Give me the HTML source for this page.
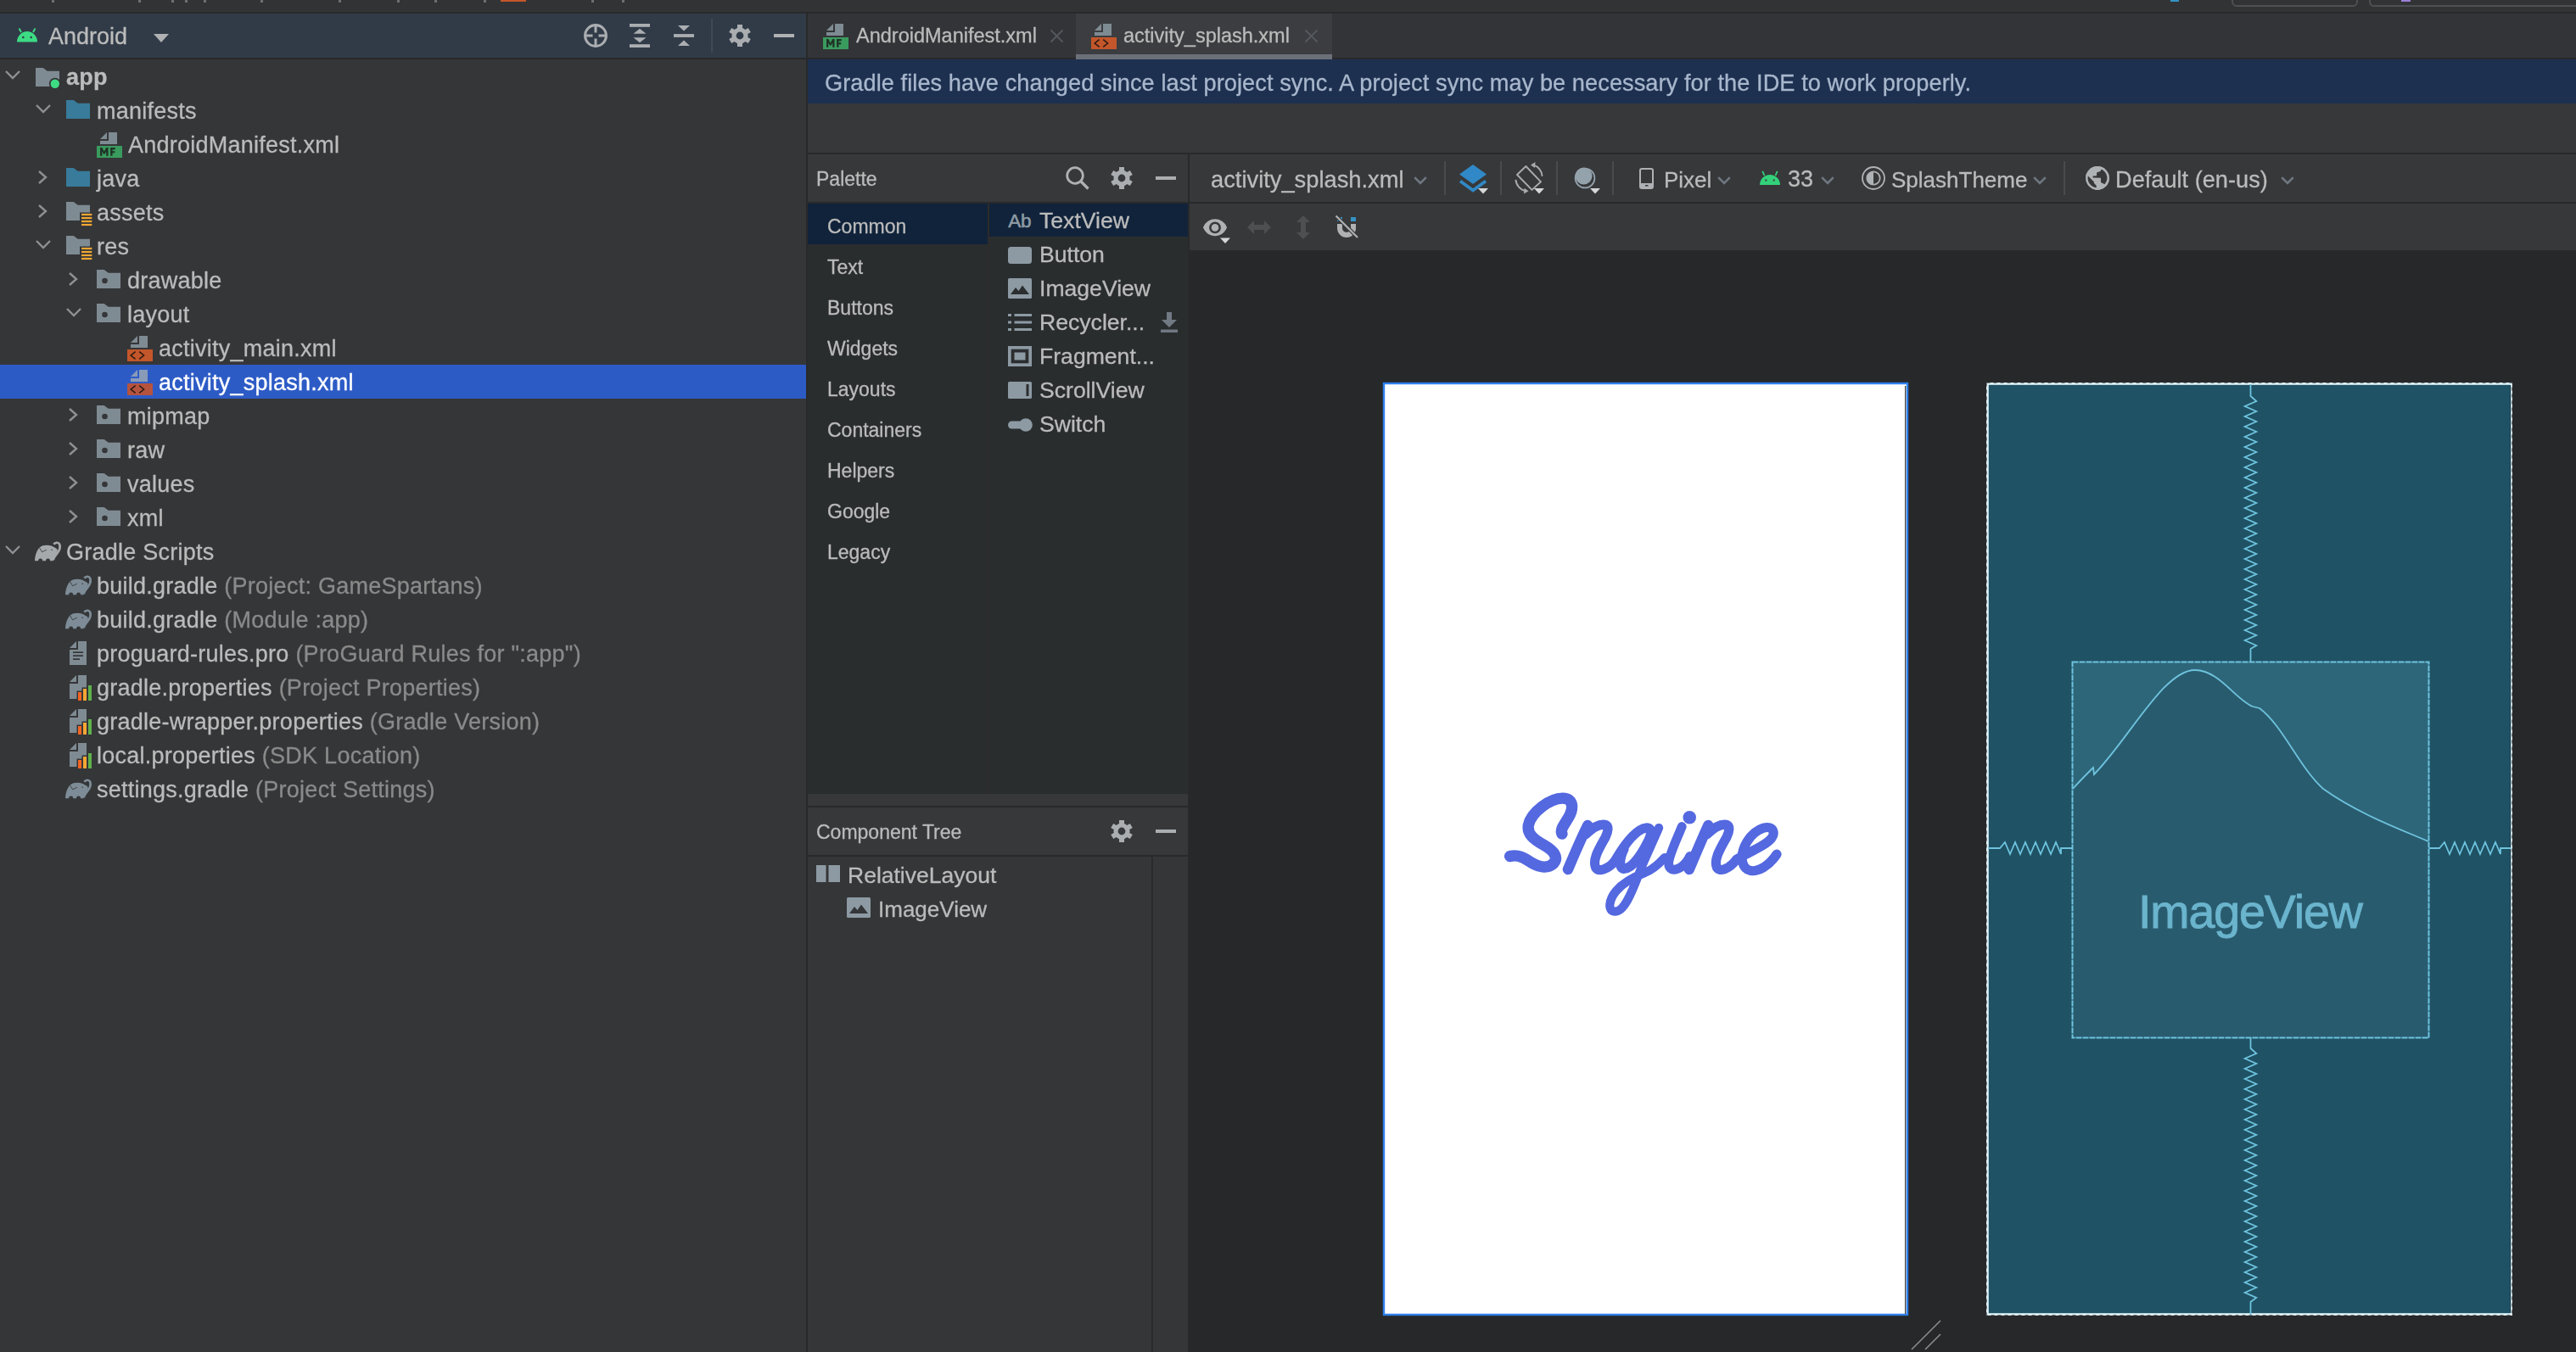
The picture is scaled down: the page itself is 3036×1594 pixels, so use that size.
<!DOCTYPE html><html><head><meta charset="utf-8"><style>html,body{margin:0;padding:0;}body{width:3036px;height:1594px;overflow:hidden;position:relative;background:#353638;font-family:"Liberation Sans", sans-serif;}.t{position:absolute;white-space:pre;line-height:1;will-change:transform;-webkit-text-stroke:0.3px currentColor;}svg{display:block}</style></head><body>
<div style="position:absolute;left:0px;top:0px;width:3036px;height:14px;background:#323335;"></div>
<div style="position:absolute;left:0px;top:14px;width:3036px;height:2px;background:#28292b;"></div>
<div style="position:absolute;left:0px;top:16px;width:950px;height:52px;background:#313b48;"></div>
<div style="position:absolute;left:0px;top:68px;width:950px;height:2px;background:#28292b;"></div>
<div style="position:absolute;left:950px;top:16px;width:2px;height:1578px;background:#28292b;"></div>
<svg style="position:absolute;left:20px;top:33px;overflow:visible" width="24" height="17"><path d="M0,16.5 A12,12.5 0 0 1 24,16.5 Z" fill="#3ddc84"/><path d="M5,5 L2.5,0.5 M19,5 L21.5,0.5" stroke="#3ddc84" stroke-width="1.8"/><circle cx="7.3" cy="11" r="1.3" fill="#313b48"/><circle cx="16.7" cy="11" r="1.3" fill="#313b48"/></svg>
<div class="t" style="left:57px;top:30.14px;font-size:27px;color:#bbbbbb;font-weight:normal;">Android</div>
<svg style="position:absolute;left:181px;top:40px;overflow:visible" width="18" height="10"><path d="M0,0 H18 L9,10 Z" fill="#afb1b3"/></svg>
<svg style="position:absolute;left:688px;top:28px;overflow:visible" width="28" height="28"><circle cx="14" cy="14" r="12.4" stroke="#abaeb1" stroke-width="3.1" fill="none"/><path d="M14,2 V10.5 M14,17.5 V26 M2,14 H10.5 M17.5,14 H26" stroke="#abaeb1" stroke-width="3"/></svg>
<svg style="position:absolute;left:742px;top:28px;overflow:visible" width="24" height="28"><rect x="0" y="0" width="24" height="3.8" fill="#abaeb1"/><rect x="0" y="24.2" width="24" height="3.8" fill="#abaeb1"/><path d="M4.5,11.8 L12,5.8 L19.5,11.8 Z M4.5,16.2 L12,22.2 L19.5,16.2 Z" fill="#abaeb1"/></svg>
<svg style="position:absolute;left:794px;top:30px;overflow:visible" width="24" height="24"><path d="M5,0 H19 L12,6.5 Z M5,24 H19 L12,17.5 Z" fill="#abaeb1"/><rect x="0" y="10.1" width="24" height="3.8" fill="#abaeb1"/></svg>
<div style="position:absolute;left:838px;top:22px;width:2px;height:40px;background:#3f4854;"></div>
<svg style="position:absolute;left:858.5px;top:29px;overflow:visible" width="26" height="26"><g fill="#abaeb1"><circle cx="13" cy="13" r="9.6"/><rect x="10" y="0" width="6" height="8" transform="rotate(0 13 13)"/><rect x="10" y="0" width="6" height="8" transform="rotate(60 13 13)"/><rect x="10" y="0" width="6" height="8" transform="rotate(120 13 13)"/><rect x="10" y="0" width="6" height="8" transform="rotate(180 13 13)"/><rect x="10" y="0" width="6" height="8" transform="rotate(240 13 13)"/><rect x="10" y="0" width="6" height="8" transform="rotate(300 13 13)"/></g><circle cx="13" cy="13" r="4.4" fill="#313b48"/></svg>
<div style="position:absolute;left:912px;top:40px;width:24px;height:4px;background:#afb1b3;"></div>
<svg style="position:absolute;left:6px;top:82.7px;overflow:visible" width="18" height="10"><path d="M1,1 L9,9 L17,1" stroke="#8e9093" stroke-width="2.4" fill="none"/></svg>
<svg style="position:absolute;left:42px;top:80px;overflow:visible" width="28" height="22"><path d="M0,0 H8.7 L13.7,3.8 H28 V22 H0 Z" fill="#7f8b93"/><circle cx="22.8" cy="18.8" r="7" fill="#353638"/><circle cx="22.8" cy="18.8" r="5.2" fill="#3ddc84"/></svg>
<div class="t" style="left:78px;top:78.14px;font-size:27px;color:#bbbbbb;font-weight:bold;letter-spacing:0.25px;">app</div>
<svg style="position:absolute;left:42px;top:122.7px;overflow:visible" width="18" height="10"><path d="M1,1 L9,9 L17,1" stroke="#8e9093" stroke-width="2.4" fill="none"/></svg>
<svg style="position:absolute;left:78px;top:118.3px;overflow:visible" width="28" height="22"><path d="M0,0 H8.7 L13.7,3.8 H28 V22 H0 Z" fill="#387b9b"/></svg>
<div class="t" style="left:114px;top:118.14px;font-size:27px;color:#bbbbbb;font-weight:normal;letter-spacing:0.25px;">manifests</div>
<svg style="position:absolute;left:114px;top:156px;overflow:visible" width="30" height="30"><path d="M4,8 L12,0 V8 Z" fill="#7f8b93"/><path d="M14,0 H24 V14 H4 V10 H14 Z" fill="#7f8b93"/><rect x="0" y="16" width="30" height="14" fill="#3a9b5e"/><path d="M4,27.7 V18.1 H6.4 L8.75,22.8 L11.1,18.1 H13.5 V27.7 H11.2 V22.2 L9.6,25.4 H7.9 L6.3,22.2 V27.7 Z" fill="#1f3327"/><rect x="16.2" y="18.1" width="2.3" height="9.6" fill="#1f3327"/><rect x="16.2" y="18.1" width="5.6" height="2.2" fill="#1f3327"/><rect x="16.2" y="22.2" width="5.1" height="2.1" fill="#1f3327"/></svg>
<div class="t" style="left:151px;top:158.14px;font-size:27px;color:#bbbbbb;font-weight:normal;letter-spacing:0.25px;">AndroidManifest.xml</div>
<svg style="position:absolute;left:45px;top:201px;overflow:visible" width="11" height="16"><path d="M1,1 L9,8 L1,15" stroke="#8e9093" stroke-width="2.4" fill="none"/></svg>
<svg style="position:absolute;left:78px;top:198.3px;overflow:visible" width="28" height="22"><path d="M0,0 H8.7 L13.7,3.8 H28 V22 H0 Z" fill="#387b9b"/></svg>
<div class="t" style="left:114px;top:198.14px;font-size:27px;color:#bbbbbb;font-weight:normal;letter-spacing:0.25px;">java</div>
<svg style="position:absolute;left:45px;top:241px;overflow:visible" width="11" height="16"><path d="M1,1 L9,8 L1,15" stroke="#8e9093" stroke-width="2.4" fill="none"/></svg>
<svg style="position:absolute;left:78px;top:238px;overflow:visible" width="31" height="30"><path d="M0,0 H8.7 L13.7,3.8 H28 V12.5 H16 V22 H0 Z" fill="#7f8b93"/><rect x="18" y="13.9" width="12.3" height="2.2" fill="#f0a732"/><rect x="18" y="17.9" width="12.3" height="2.2" fill="#f0a732"/><rect x="18" y="21.9" width="12.3" height="2.2" fill="#f0a732"/><rect x="18" y="25.9" width="12.3" height="2.2" fill="#f0a732"/></svg>
<div class="t" style="left:114px;top:238.14px;font-size:27px;color:#bbbbbb;font-weight:normal;letter-spacing:0.25px;">assets</div>
<svg style="position:absolute;left:42px;top:282.7px;overflow:visible" width="18" height="10"><path d="M1,1 L9,9 L17,1" stroke="#8e9093" stroke-width="2.4" fill="none"/></svg>
<svg style="position:absolute;left:78px;top:278px;overflow:visible" width="31" height="30"><path d="M0,0 H8.7 L13.7,3.8 H28 V12.5 H16 V22 H0 Z" fill="#7f8b93"/><rect x="18" y="13.9" width="12.3" height="2.2" fill="#f0a732"/><rect x="18" y="17.9" width="12.3" height="2.2" fill="#f0a732"/><rect x="18" y="21.9" width="12.3" height="2.2" fill="#f0a732"/><rect x="18" y="25.9" width="12.3" height="2.2" fill="#f0a732"/></svg>
<div class="t" style="left:114px;top:278.14px;font-size:27px;color:#bbbbbb;font-weight:normal;letter-spacing:0.25px;">res</div>
<svg style="position:absolute;left:81px;top:321px;overflow:visible" width="11" height="16"><path d="M1,1 L9,8 L1,15" stroke="#8e9093" stroke-width="2.4" fill="none"/></svg>
<svg style="position:absolute;left:114px;top:318px;overflow:visible" width="28" height="22"><path d="M0,0 H8.7 L13.7,3.8 H28 V22 H0 Z" fill="#7f8b93"/><circle cx="9.5" cy="13" r="3.3" fill="#353638"/></svg>
<div class="t" style="left:150px;top:318.14px;font-size:27px;color:#bbbbbb;font-weight:normal;letter-spacing:0.25px;">drawable</div>
<svg style="position:absolute;left:78px;top:362.7px;overflow:visible" width="18" height="10"><path d="M1,1 L9,9 L17,1" stroke="#8e9093" stroke-width="2.4" fill="none"/></svg>
<svg style="position:absolute;left:114px;top:358px;overflow:visible" width="28" height="22"><path d="M0,0 H8.7 L13.7,3.8 H28 V22 H0 Z" fill="#7f8b93"/><circle cx="9.5" cy="13" r="3.3" fill="#353638"/></svg>
<div class="t" style="left:150px;top:358.14px;font-size:27px;color:#bbbbbb;font-weight:normal;letter-spacing:0.25px;">layout</div>
<svg style="position:absolute;left:150px;top:396px;overflow:visible" width="30" height="30"><path d="M4,8 L12,0 V8 Z" fill="#7f8b93"/><path d="M14,0 H24 V14 H4 V10 H14 Z" fill="#7f8b93"/><rect x="0" y="16" width="30" height="14" fill="#c3562a"/><path d="M9.6,18.6 L4.2,23 L9.6,27.4 M14.2,18.6 L19.6,23 L14.2,27.4" stroke="#2a1a12" stroke-width="1.5" fill="none"/></svg>
<div class="t" style="left:187px;top:398.14px;font-size:27px;color:#bbbbbb;font-weight:normal;letter-spacing:0.25px;">activity_main.xml</div>
<div style="position:absolute;left:0px;top:430px;width:950px;height:40px;background:#2d5bc6;"></div>
<svg style="position:absolute;left:150px;top:436px;overflow:visible" width="30" height="30"><path d="M4,8 L12,0 V8 Z" fill="#8a9bb8"/><path d="M14,0 H24 V14 H4 V10 H14 Z" fill="#8a9bb8"/><rect x="0" y="16" width="30" height="14" fill="#b5533f"/><path d="M9.6,18.6 L4.2,23 L9.6,27.4 M14.2,18.6 L19.6,23 L14.2,27.4" stroke="#2a1a12" stroke-width="1.5" fill="none"/></svg>
<div class="t" style="left:187px;top:438.14px;font-size:27px;color:#ffffff;font-weight:normal;letter-spacing:0.25px;">activity_splash.xml</div>
<svg style="position:absolute;left:81px;top:481px;overflow:visible" width="11" height="16"><path d="M1,1 L9,8 L1,15" stroke="#8e9093" stroke-width="2.4" fill="none"/></svg>
<svg style="position:absolute;left:114px;top:478px;overflow:visible" width="28" height="22"><path d="M0,0 H8.7 L13.7,3.8 H28 V22 H0 Z" fill="#7f8b93"/><circle cx="9.5" cy="13" r="3.3" fill="#353638"/></svg>
<div class="t" style="left:150px;top:478.14px;font-size:27px;color:#bbbbbb;font-weight:normal;letter-spacing:0.25px;">mipmap</div>
<svg style="position:absolute;left:81px;top:521px;overflow:visible" width="11" height="16"><path d="M1,1 L9,8 L1,15" stroke="#8e9093" stroke-width="2.4" fill="none"/></svg>
<svg style="position:absolute;left:114px;top:518px;overflow:visible" width="28" height="22"><path d="M0,0 H8.7 L13.7,3.8 H28 V22 H0 Z" fill="#7f8b93"/><circle cx="9.5" cy="13" r="3.3" fill="#353638"/></svg>
<div class="t" style="left:150px;top:518.14px;font-size:27px;color:#bbbbbb;font-weight:normal;letter-spacing:0.25px;">raw</div>
<svg style="position:absolute;left:81px;top:561px;overflow:visible" width="11" height="16"><path d="M1,1 L9,8 L1,15" stroke="#8e9093" stroke-width="2.4" fill="none"/></svg>
<svg style="position:absolute;left:114px;top:558px;overflow:visible" width="28" height="22"><path d="M0,0 H8.7 L13.7,3.8 H28 V22 H0 Z" fill="#7f8b93"/><circle cx="9.5" cy="13" r="3.3" fill="#353638"/></svg>
<div class="t" style="left:150px;top:558.14px;font-size:27px;color:#bbbbbb;font-weight:normal;letter-spacing:0.25px;">values</div>
<svg style="position:absolute;left:81px;top:601px;overflow:visible" width="11" height="16"><path d="M1,1 L9,8 L1,15" stroke="#8e9093" stroke-width="2.4" fill="none"/></svg>
<svg style="position:absolute;left:114px;top:598px;overflow:visible" width="28" height="22"><path d="M0,0 H8.7 L13.7,3.8 H28 V22 H0 Z" fill="#7f8b93"/><circle cx="9.5" cy="13" r="3.3" fill="#353638"/></svg>
<div class="t" style="left:150px;top:598.14px;font-size:27px;color:#bbbbbb;font-weight:normal;letter-spacing:0.25px;">xml</div>
<svg style="position:absolute;left:6px;top:642.7px;overflow:visible" width="18" height="10"><path d="M1,1 L9,9 L17,1" stroke="#8e9093" stroke-width="2.4" fill="none"/></svg>
<svg style="position:absolute;left:41px;top:639px;overflow:visible" width="30" height="22"><g transform="scale(0.0592)"><path d="M0,375 C2,270 40,160 95,108 C160,55 260,55 340,80 L425,125 C450,140 458,160 448,190 C430,240 385,300 368,335 L365,375 L305,375 A42,45 0 0 0 220,375 L155,375 A42,45 0 0 0 70,375 Z" fill="#a6a9ac"/><path d="M378,48 C405,5 470,-2 492,45 C515,100 492,165 445,225 C405,275 372,310 368,360" stroke="#a6a9ac" stroke-width="46" fill="none"/><path d="M92,112 L145,200 L235,155" stroke="#353638" stroke-width="14" fill="none"/><circle cx="340" cy="155" r="13" fill="#353638"/></g></svg>
<div class="t" style="left:78px;top:638.14px;font-size:27px;color:#bbbbbb;font-weight:normal;letter-spacing:0.25px;">Gradle Scripts</div>
<svg style="position:absolute;left:77px;top:679px;overflow:visible" width="30" height="22"><g transform="scale(0.0592)"><path d="M0,375 C2,270 40,160 95,108 C160,55 260,55 340,80 L425,125 C450,140 458,160 448,190 C430,240 385,300 368,335 L365,375 L305,375 A42,45 0 0 0 220,375 L155,375 A42,45 0 0 0 70,375 Z" fill="#7d8c96"/><path d="M378,48 C405,5 470,-2 492,45 C515,100 492,165 445,225 C405,275 372,310 368,360" stroke="#7d8c96" stroke-width="46" fill="none"/><path d="M92,112 L145,200 L235,155" stroke="#353638" stroke-width="14" fill="none"/><circle cx="340" cy="155" r="13" fill="#353638"/></g></svg>
<div class="t" style="left:114px;top:678.14px;font-size:27px;color:#bbbbbb;font-weight:normal;letter-spacing:0.25px;">build.gradle <span style="color:#8a8a8a">(Project: GameSpartans)</span></div>
<svg style="position:absolute;left:77px;top:719px;overflow:visible" width="30" height="22"><g transform="scale(0.0592)"><path d="M0,375 C2,270 40,160 95,108 C160,55 260,55 340,80 L425,125 C450,140 458,160 448,190 C430,240 385,300 368,335 L365,375 L305,375 A42,45 0 0 0 220,375 L155,375 A42,45 0 0 0 70,375 Z" fill="#7d8c96"/><path d="M378,48 C405,5 470,-2 492,45 C515,100 492,165 445,225 C405,275 372,310 368,360" stroke="#7d8c96" stroke-width="46" fill="none"/><path d="M92,112 L145,200 L235,155" stroke="#353638" stroke-width="14" fill="none"/><circle cx="340" cy="155" r="13" fill="#353638"/></g></svg>
<div class="t" style="left:114px;top:718.14px;font-size:27px;color:#bbbbbb;font-weight:normal;letter-spacing:0.25px;">build.gradle <span style="color:#8a8a8a">(Module :app)</span></div>
<svg style="position:absolute;left:82px;top:756px;overflow:visible" width="20" height="28"><path d="M0,8 L8,0 V8 Z" fill="#7f8b93"/><path d="M10,0 H20 V28 H0 V10 H10 Z" fill="#7f8b93"/><rect x="4" y="12.3" width="12" height="1.7" fill="#353638"/><rect x="4" y="16.3" width="12" height="1.7" fill="#353638"/><rect x="4" y="20.3" width="8" height="1.7" fill="#353638"/></svg>
<div class="t" style="left:114px;top:758.14px;font-size:27px;color:#bbbbbb;font-weight:normal;letter-spacing:0.25px;">proguard-rules.pro <span style="color:#8a8a8a">(ProGuard Rules for ":app")</span></div>
<svg style="position:absolute;left:82px;top:796px;overflow:visible" width="28" height="30"><path d="M0,8 L8,0 V8 Z" fill="#7f8b93"/><path d="M10,0 H20 V28 H0 V10 H10 Z" fill="#7f8b93"/><path d="M8.5,31 V18.5 H14.5 V14.5 H20.5 V31 Z" fill="#353638"/><rect x="10" y="20" width="4" height="10" fill="#f26522"/><rect x="16" y="16" width="4" height="14" fill="#f5a633"/><rect x="22" y="12" width="4" height="18" fill="#5eb14a"/></svg>
<div class="t" style="left:114px;top:798.14px;font-size:27px;color:#bbbbbb;font-weight:normal;letter-spacing:0.25px;">gradle.properties <span style="color:#8a8a8a">(Project Properties)</span></div>
<svg style="position:absolute;left:82px;top:836px;overflow:visible" width="28" height="30"><path d="M0,8 L8,0 V8 Z" fill="#7f8b93"/><path d="M10,0 H20 V28 H0 V10 H10 Z" fill="#7f8b93"/><path d="M8.5,31 V18.5 H14.5 V14.5 H20.5 V31 Z" fill="#353638"/><rect x="10" y="20" width="4" height="10" fill="#f26522"/><rect x="16" y="16" width="4" height="14" fill="#f5a633"/><rect x="22" y="12" width="4" height="18" fill="#5eb14a"/></svg>
<div class="t" style="left:114px;top:838.14px;font-size:27px;color:#bbbbbb;font-weight:normal;letter-spacing:0.25px;">gradle-wrapper.properties <span style="color:#8a8a8a">(Gradle Version)</span></div>
<svg style="position:absolute;left:82px;top:876px;overflow:visible" width="28" height="30"><path d="M0,8 L8,0 V8 Z" fill="#7f8b93"/><path d="M10,0 H20 V28 H0 V10 H10 Z" fill="#7f8b93"/><path d="M8.5,31 V18.5 H14.5 V14.5 H20.5 V31 Z" fill="#353638"/><rect x="10" y="20" width="4" height="10" fill="#f26522"/><rect x="16" y="16" width="4" height="14" fill="#f5a633"/><rect x="22" y="12" width="4" height="18" fill="#5eb14a"/></svg>
<div class="t" style="left:114px;top:878.14px;font-size:27px;color:#bbbbbb;font-weight:normal;letter-spacing:0.25px;">local.properties <span style="color:#8a8a8a">(SDK Location)</span></div>
<svg style="position:absolute;left:77px;top:919px;overflow:visible" width="30" height="22"><g transform="scale(0.0592)"><path d="M0,375 C2,270 40,160 95,108 C160,55 260,55 340,80 L425,125 C450,140 458,160 448,190 C430,240 385,300 368,335 L365,375 L305,375 A42,45 0 0 0 220,375 L155,375 A42,45 0 0 0 70,375 Z" fill="#7d8c96"/><path d="M378,48 C405,5 470,-2 492,45 C515,100 492,165 445,225 C405,275 372,310 368,360" stroke="#7d8c96" stroke-width="46" fill="none"/><path d="M92,112 L145,200 L235,155" stroke="#353638" stroke-width="14" fill="none"/><circle cx="340" cy="155" r="13" fill="#353638"/></g></svg>
<div class="t" style="left:114px;top:918.14px;font-size:27px;color:#bbbbbb;font-weight:normal;letter-spacing:0.25px;">settings.gradle <span style="color:#8a8a8a">(Project Settings)</span></div>
<div style="position:absolute;left:952px;top:16px;width:2084px;height:52px;background:#333437;"></div>
<div style="position:absolute;left:1268px;top:16px;width:302px;height:52px;background:#3b3d40;"></div>
<div style="position:absolute;left:952px;top:68px;width:2084px;height:2px;background:#28292b;"></div>
<div style="position:absolute;left:1268px;top:64.3px;width:302px;height:5.7px;background:#6b6f78;"></div>
<svg style="position:absolute;left:970px;top:28px;overflow:visible" width="30" height="30"><path d="M4,8 L12,0 V8 Z" fill="#7f8b93"/><path d="M14,0 H24 V14 H4 V10 H14 Z" fill="#7f8b93"/><rect x="0" y="16" width="30" height="14" fill="#3a9b5e"/><path d="M4,27.7 V18.1 H6.4 L8.75,22.8 L11.1,18.1 H13.5 V27.7 H11.2 V22.2 L9.6,25.4 H7.9 L6.3,22.2 V27.7 Z" fill="#1f3327"/><rect x="16.2" y="18.1" width="2.3" height="9.6" fill="#1f3327"/><rect x="16.2" y="18.1" width="5.6" height="2.2" fill="#1f3327"/><rect x="16.2" y="22.2" width="5.1" height="2.1" fill="#1f3327"/></svg>
<div class="t" style="left:1009px;top:31.11px;font-size:23.5px;color:#bbbbbb;font-weight:normal;">AndroidManifest.xml</div>
<svg style="position:absolute;left:1238px;top:35px;overflow:visible" width="15" height="15"><path d="M0.5,0.5 L14.5,14.5 M14.5,0.5 L0.5,14.5" stroke="#55595d" stroke-width="1.8"/></svg>
<svg style="position:absolute;left:1286px;top:28px;overflow:visible" width="30" height="30"><path d="M4,8 L12,0 V8 Z" fill="#7f8b93"/><path d="M14,0 H24 V14 H4 V10 H14 Z" fill="#7f8b93"/><rect x="0" y="16" width="30" height="14" fill="#c3562a"/><path d="M9.6,18.6 L4.2,23 L9.6,27.4 M14.2,18.6 L19.6,23 L14.2,27.4" stroke="#2a1a12" stroke-width="1.5" fill="none"/></svg>
<div class="t" style="left:1324px;top:31.11px;font-size:23.5px;color:#bbbbbb;font-weight:normal;">activity_splash.xml</div>
<svg style="position:absolute;left:1538px;top:35px;overflow:visible" width="15" height="15"><path d="M0.5,0.5 L14.5,14.5 M14.5,0.5 L0.5,14.5" stroke="#55595d" stroke-width="1.8"/></svg>
<div style="position:absolute;left:590px;top:0px;width:30px;height:2px;background:#c3562a;"></div>
<div style="position:absolute;left:60.5px;top:0px;width:3px;height:2.5px;background:#6e6f71;"></div>
<div style="position:absolute;left:162.5px;top:0px;width:3px;height:2.5px;background:#6e6f71;"></div>
<div style="position:absolute;left:201.5px;top:0px;width:3px;height:2.5px;background:#6e6f71;"></div>
<div style="position:absolute;left:217.5px;top:0px;width:3px;height:2.5px;background:#6e6f71;"></div>
<div style="position:absolute;left:240.1px;top:0px;width:3px;height:2.5px;background:#6e6f71;"></div>
<div style="position:absolute;left:307.1px;top:0px;width:3px;height:2.5px;background:#6e6f71;"></div>
<div style="position:absolute;left:399.3px;top:0px;width:3px;height:2.5px;background:#6e6f71;"></div>
<div style="position:absolute;left:468.2px;top:0px;width:3px;height:2.5px;background:#6e6f71;"></div>
<div style="position:absolute;left:512.1px;top:0px;width:3px;height:2.5px;background:#6e6f71;"></div>
<div style="position:absolute;left:570.3px;top:0px;width:3px;height:2.5px;background:#6e6f71;"></div>
<div style="position:absolute;left:696.5px;top:0px;width:3px;height:2.5px;background:#6e6f71;"></div>
<div style="position:absolute;left:733.4px;top:0px;width:3px;height:2.5px;background:#6e6f71;"></div>
<div style="position:absolute;left:2558px;top:0px;width:10px;height:2px;background:#3592c4;"></div>
<div style="position:absolute;left:2830px;top:0px;width:11px;height:2px;background:#9b7fd4;"></div>
<div style="position:absolute;left:2630px;top:-19px;width:149px;height:27px;border:2px solid #4e5053;border-radius:6px;box-sizing:border-box"></div>
<div style="position:absolute;left:2792px;top:-19px;width:260px;height:27px;border:2px solid #4e5053;border-radius:6px;box-sizing:border-box"></div>
<div style="position:absolute;left:952px;top:70px;width:2084px;height:52px;background:#1d3050;"></div>
<div class="t" style="left:972px;top:83.98px;font-size:27.2px;color:#a8b7cc;font-weight:normal;letter-spacing:0.06px;">Gradle files have changed since last project sync. A project sync may be necessary for the IDE to work properly.</div>
<div style="position:absolute;left:952px;top:122px;width:2084px;height:58px;background:#37383a;"></div>
<div style="position:absolute;left:952px;top:180px;width:2084px;height:2px;background:#28292b;"></div>
<div style="position:absolute;left:952px;top:182px;width:448px;height:56px;background:#37383a;"></div>
<div class="t" style="left:962px;top:199.53px;font-size:23px;color:#bbbbbb;font-weight:normal;">Palette</div>
<svg style="position:absolute;left:1256px;top:196px;overflow:visible" width="28" height="28"><circle cx="11" cy="11" r="9.3" stroke="#afb1b3" stroke-width="2.8" fill="none"/><path d="M17.5,17.5 L26.5,26.5" stroke="#afb1b3" stroke-width="3.2"/></svg>
<svg style="position:absolute;left:1309px;top:197px;overflow:visible" width="26" height="26"><g fill="#abaeb1"><circle cx="13" cy="13" r="9.6"/><rect x="10" y="0" width="6" height="8" transform="rotate(0 13 13)"/><rect x="10" y="0" width="6" height="8" transform="rotate(60 13 13)"/><rect x="10" y="0" width="6" height="8" transform="rotate(120 13 13)"/><rect x="10" y="0" width="6" height="8" transform="rotate(180 13 13)"/><rect x="10" y="0" width="6" height="8" transform="rotate(240 13 13)"/><rect x="10" y="0" width="6" height="8" transform="rotate(300 13 13)"/></g><circle cx="13" cy="13" r="4.4" fill="#37383a"/></svg>
<div style="position:absolute;left:1362px;top:208px;width:24px;height:4px;background:#abaeb1;"></div>
<div style="position:absolute;left:952px;top:238px;width:448px;height:2px;background:#28292b;"></div>
<div style="position:absolute;left:952px;top:240px;width:448px;height:696px;background:#2a2d2e;"></div>
<div style="position:absolute;left:1164px;top:240px;width:1.5px;height:696px;background:#2e2b2b;"></div>
<div style="position:absolute;left:952px;top:240px;width:212px;height:48px;background:#10233a;"></div>
<div style="position:absolute;left:1166px;top:240px;width:234px;height:39px;background:#10233a;"></div>
<div class="t" style="left:975px;top:255.53px;font-size:23px;color:#bbbbbb;font-weight:normal;">Common</div>
<div class="t" style="left:975px;top:303.53px;font-size:23px;color:#bbbbbb;font-weight:normal;">Text</div>
<div class="t" style="left:975px;top:351.53px;font-size:23px;color:#bbbbbb;font-weight:normal;">Buttons</div>
<div class="t" style="left:975px;top:399.53px;font-size:23px;color:#bbbbbb;font-weight:normal;">Widgets</div>
<div class="t" style="left:975px;top:447.53px;font-size:23px;color:#bbbbbb;font-weight:normal;">Layouts</div>
<div class="t" style="left:975px;top:495.53px;font-size:23px;color:#bbbbbb;font-weight:normal;">Containers</div>
<div class="t" style="left:975px;top:543.53px;font-size:23px;color:#bbbbbb;font-weight:normal;">Helpers</div>
<div class="t" style="left:975px;top:591.53px;font-size:23px;color:#bbbbbb;font-weight:normal;">Google</div>
<div class="t" style="left:975px;top:639.53px;font-size:23px;color:#bbbbbb;font-weight:normal;">Legacy</div>
<svg style="position:absolute;left:1188px;top:251px;overflow:visible" width="28" height="24"><text x="0.3" y="17" font-family="Liberation Sans" font-size="22.5" fill="#8d9aa3" stroke="#8d9aa3" stroke-width="0.6" letter-spacing="-0.3">Ab</text></svg>
<div class="t" style="left:1224.5px;top:247.48px;font-size:26.6px;color:#bbbbbb;font-weight:normal;">TextView</div>
<svg style="position:absolute;left:1188px;top:290px;overflow:visible" width="28" height="24"><rect x="0" y="1" width="28" height="20" rx="3.5" fill="#8d9aa3"/></svg>
<div class="t" style="left:1224.5px;top:287.48px;font-size:26.6px;color:#bbbbbb;font-weight:normal;">Button</div>
<svg style="position:absolute;left:1188px;top:328px;overflow:visible" width="28" height="24"><rect x="0" y="0" width="28" height="24" rx="1.5" fill="#8d9aa3"/><path d="M3,19 L9,11 L12.5,15 L17,8.5 L25,19 Z" fill="#2b2d2f"/></svg>
<div class="t" style="left:1224.5px;top:327.48px;font-size:26.6px;color:#bbbbbb;font-weight:normal;">ImageView</div>
<svg style="position:absolute;left:1188px;top:370px;overflow:visible" width="28" height="24"><g fill="#8d9aa3"><rect x="0" y="0" width="4" height="3"/><rect x="7.5" y="0" width="20.5" height="3"/><rect x="0" y="8.5" width="4" height="3"/><rect x="7.5" y="8.5" width="20.5" height="3"/><rect x="0" y="17" width="4" height="3"/><rect x="7.5" y="17" width="20.5" height="3"/></g></svg>
<div class="t" style="left:1224.5px;top:367.48px;font-size:26.6px;color:#bbbbbb;font-weight:normal;">Recycler...</div>
<svg style="position:absolute;left:1188px;top:408px;overflow:visible" width="28" height="24"><rect x="0" y="0" width="28" height="24" fill="#8d9aa3"/><rect x="3.7" y="3.7" width="20.6" height="16.6" fill="#2b2d2f"/><rect x="7.5" y="7.5" width="13" height="9" fill="#8d9aa3"/></svg>
<div class="t" style="left:1224.5px;top:407.48px;font-size:26.6px;color:#bbbbbb;font-weight:normal;">Fragment...</div>
<svg style="position:absolute;left:1188px;top:450px;overflow:visible" width="28" height="24"><rect x="0" y="0" width="28" height="20" rx="1.5" fill="#8d9aa3"/><rect x="21.5" y="3" width="3" height="14" fill="#2b2d2f"/></svg>
<div class="t" style="left:1224.5px;top:447.48px;font-size:26.6px;color:#bbbbbb;font-weight:normal;">ScrollView</div>
<svg style="position:absolute;left:1188px;top:492px;overflow:visible" width="28" height="24"><path d="M4.5,4.5 H16 V13.5 H4.5 A4.5,4.5 0 0 1 4.5,4.5 Z" fill="#8d9aa3"/><circle cx="21" cy="9" r="7.8" fill="#8d9aa3"/></svg>
<div class="t" style="left:1224.5px;top:487.48px;font-size:26.6px;color:#bbbbbb;font-weight:normal;">Switch</div>
<svg style="position:absolute;left:1368px;top:368px;overflow:visible" width="20" height="24"><path d="M7,0 H13 V9 H19 L10,18 L1,9 H7 Z" fill="#707984"/><rect x="0" y="20.5" width="20" height="3.5" fill="#707984"/></svg>
<div style="position:absolute;left:952px;top:936px;width:448px;height:14px;background:#37383a;"></div>
<div style="position:absolute;left:952px;top:950px;width:448px;height:2px;background:#28292b;"></div>
<div style="position:absolute;left:952px;top:952px;width:448px;height:56px;background:#37383a;"></div>
<div class="t" style="left:962px;top:969.53px;font-size:23px;color:#bbbbbb;font-weight:normal;">Component Tree</div>
<svg style="position:absolute;left:1309px;top:967px;overflow:visible" width="26" height="26"><g fill="#abaeb1"><circle cx="13" cy="13" r="9.6"/><rect x="10" y="0" width="6" height="8" transform="rotate(0 13 13)"/><rect x="10" y="0" width="6" height="8" transform="rotate(60 13 13)"/><rect x="10" y="0" width="6" height="8" transform="rotate(120 13 13)"/><rect x="10" y="0" width="6" height="8" transform="rotate(180 13 13)"/><rect x="10" y="0" width="6" height="8" transform="rotate(240 13 13)"/><rect x="10" y="0" width="6" height="8" transform="rotate(300 13 13)"/></g><circle cx="13" cy="13" r="4.4" fill="#37383a"/></svg>
<div style="position:absolute;left:1362px;top:978px;width:24px;height:4px;background:#abaeb1;"></div>
<div style="position:absolute;left:952px;top:1008px;width:448px;height:2px;background:#28292b;"></div>
<div style="position:absolute;left:952px;top:1010px;width:448px;height:584px;background:#353638;"></div>
<div style="position:absolute;left:1357px;top:1010px;width:2px;height:584px;background:#2a2b2d;"></div>
<svg style="position:absolute;left:962px;top:1020px;overflow:visible" width="28" height="20"><rect x="0" y="0" width="11.5" height="20" fill="#8d9aa3"/><rect x="14.5" y="0" width="13.5" height="20" fill="#8d9aa3"/></svg>
<div class="t" style="left:999px;top:1018.57px;font-size:26.5px;color:#bbbbbb;font-weight:normal;">RelativeLayout</div>
<svg style="position:absolute;left:998px;top:1058px;overflow:visible" width="28" height="24"><rect x="0" y="0" width="28" height="24" rx="1.5" fill="#8d9aa3"/><path d="M3,19 L9,11 L12.5,15 L17,8.5 L25,19 Z" fill="#353638"/></svg>
<div class="t" style="left:1035px;top:1058.99px;font-size:26px;color:#bbbbbb;font-weight:normal;">ImageView</div>
<div style="position:absolute;left:1400px;top:182px;width:2px;height:1412px;background:#28292b;"></div>
<div style="position:absolute;left:1402px;top:182px;width:1634px;height:56px;background:#37383a;"></div>
<div style="position:absolute;left:1402px;top:238px;width:1634px;height:2px;background:#28292b;"></div>
<div style="position:absolute;left:1402px;top:240px;width:1634px;height:55px;background:#37383a;"></div>
<div style="position:absolute;left:1402px;top:295px;width:1634px;height:2px;background:#28292b;"></div>
<div style="position:absolute;left:1402px;top:297px;width:1634px;height:1297px;background:#27282a;"></div>
<div class="t" style="left:1427px;top:197.89px;font-size:27.3px;color:#bbbbbb;font-weight:normal;">activity_splash.xml</div>
<svg style="position:absolute;left:1666px;top:207.5px;overflow:visible" width="16" height="10"><path d="M1.2,1.2 L8,8 L14.8,1.2" stroke="#6f7881" stroke-width="2.6" fill="none"/></svg>
<div style="position:absolute;left:1702px;top:190px;width:2px;height:40px;background:#4a4b4d;"></div>
<div style="position:absolute;left:1768px;top:190px;width:2px;height:40px;background:#4a4b4d;"></div>
<div style="position:absolute;left:1834px;top:190px;width:2px;height:40px;background:#4a4b4d;"></div>
<div style="position:absolute;left:1900px;top:190px;width:2px;height:40px;background:#4a4b4d;"></div>
<div style="position:absolute;left:2432px;top:190px;width:2px;height:40px;background:#4a4b4d;"></div>
<svg style="position:absolute;left:1720px;top:194px;overflow:visible" width="34" height="34"><path d="M16,0 L32,11.5 L16,23 L0,11.5 Z" fill="#3089c6"/><path d="M1,19.5 L16,30.5 L31,19.5" stroke="#3089c6" stroke-width="3.8" fill="none"/><path d="M22,28 H34 L28,34.5 Z" fill="#d4d6d8"/></svg>
<svg style="position:absolute;left:1780px;top:190px;overflow:visible" width="45" height="45"><path d="M8,16 L18.4,6 L36,24.3 L25.5,33.9 Z" stroke="#a9acaf" stroke-width="1.9" fill="none" stroke-linejoin="round"/><path d="M27,4.3 A15,15 0 0 1 37.6,17.7" stroke="#a9acaf" stroke-width="1.9" fill="none"/><path d="M24,4.6 L29.5,1 L29,8 Z" fill="#a9acaf"/><path d="M6.4,21.8 A15,15 0 0 0 18.5,35.3" stroke="#a9acaf" stroke-width="1.9" fill="none"/><path d="M21.5,35.2 L16,38.6 L16.5,31.8 Z" fill="#a9acaf"/><path d="M28,32 H40 L34,38.5 Z" fill="#d4d6d8"/></svg>
<svg style="position:absolute;left:1850px;top:192px;overflow:visible" width="40" height="40"><circle cx="18" cy="18" r="11.4" stroke="#94a2ac" stroke-width="1.8" fill="none"/><circle cx="16.5" cy="15.5" r="10" fill="#94a2ac"/><path d="M24,30 H36 L30,36.5 Z" fill="#d4d6d8"/></svg>
<svg style="position:absolute;left:1932px;top:198px;overflow:visible" width="17" height="25"><rect x="1" y="1" width="15" height="23" rx="2" stroke="#aeb1b4" stroke-width="2" fill="none"/><rect x="1" y="18" width="15" height="6" fill="#aeb1b4"/><rect x="7" y="20" width="3.5" height="1.5" fill="#37383a"/></svg>
<div class="t" style="left:1961px;top:198.99px;font-size:26px;color:#bbbbbb;font-weight:normal;">Pixel</div>
<svg style="position:absolute;left:2024px;top:207.5px;overflow:visible" width="16" height="10"><path d="M1.2,1.2 L8,8 L14.8,1.2" stroke="#6f7881" stroke-width="2.6" fill="none"/></svg>
<svg style="position:absolute;left:2074px;top:201px;overflow:visible" width="24" height="17"><path d="M0,17 A12,12 0 0 1 24,17 Z" fill="#33d17a"/><path d="M5.5,6 L3.3,0.8 M18.5,6 L20.7,0.8" stroke="#33d17a" stroke-width="1.8"/><rect x="6.3" y="10.5" width="2" height="2" fill="#37383a"/><rect x="15.7" y="10.5" width="2" height="2" fill="#37383a"/></svg>
<div class="t" style="left:2107px;top:198.14px;font-size:27px;color:#bbbbbb;font-weight:normal;">33</div>
<svg style="position:absolute;left:2146px;top:207.5px;overflow:visible" width="16" height="10"><path d="M1.2,1.2 L8,8 L14.8,1.2" stroke="#6f7881" stroke-width="2.6" fill="none"/></svg>
<svg style="position:absolute;left:2194px;top:196px;overflow:visible" width="28" height="28"><circle cx="14" cy="14" r="13" stroke="#aeb2b5" stroke-width="1.8" fill="none"/><circle cx="14" cy="14" r="7.7" stroke="#aeb2b5" stroke-width="1.8" fill="none"/><path d="M14,6.3 A7.7,7.7 0 0 0 14,21.7 Z" fill="#aeb2b5"/></svg>
<div class="t" style="left:2229px;top:198.99px;font-size:26px;color:#bbbbbb;font-weight:normal;">SplashTheme</div>
<svg style="position:absolute;left:2396px;top:207.5px;overflow:visible" width="16" height="10"><path d="M1.2,1.2 L8,8 L14.8,1.2" stroke="#6f7881" stroke-width="2.6" fill="none"/></svg>
<svg style="position:absolute;left:2450px;top:190px;overflow:visible" width="45" height="40"><circle cx="22" cy="20" r="13.9" fill="#aeb2b5"/><path d="M26.3,10.1 L25.4,12.1 L21.3,13.3 L21,17.2 L16.6,17.5 L16.6,19.5 L26,19.8 L26,25.1 L30.5,27.2 L34,22 L34,14 L30,9 Z M11.2,17.8 L17.8,24.3 L18,26 L20.7,28.7 L20.7,31.5 L14,32 L8,27 L7.5,19 Z" fill="#37383a"/><circle cx="22" cy="20" r="12.65" stroke="#aeb2b5" stroke-width="2.5" fill="none"/></svg>
<div class="t" style="left:2493px;top:197.98px;font-size:27.2px;color:#bbbbbb;font-weight:normal;">Default (en-us)</div>
<svg style="position:absolute;left:2688px;top:207.5px;overflow:visible" width="16" height="10"><path d="M1.2,1.2 L8,8 L14.8,1.2" stroke="#6f7881" stroke-width="2.6" fill="none"/></svg>
<svg style="position:absolute;left:1418px;top:257.5px;overflow:visible" width="34" height="30"><path d="M0,10.25 C5,-3 23,-3 28,10.25 C23,23.5 5,23.5 0,10.25 Z" fill="#afb1b3"/><circle cx="14" cy="10.4" r="6.9" fill="#37383a"/><circle cx="14" cy="10.4" r="4.3" fill="#afb1b3"/><path d="M20,22.5 H32 L26,29 Z" fill="#d4d6d8"/></svg>
<svg style="position:absolute;left:1470px;top:260px;overflow:visible" width="28" height="16"><path d="M0,8 L8,0 V5 H20 V0 L28,8 L20,16 V11 H8 V16 Z" fill="#4e4f51"/></svg>
<svg style="position:absolute;left:1528px;top:254px;overflow:visible" width="16" height="28"><path d="M8,0 L16,8 H11 V20 H16 L8,28 L0,20 H5 V8 H0 Z" fill="#4e4f51"/></svg>
<svg style="position:absolute;left:1574px;top:254px;overflow:visible" width="28" height="28"><path d="M2,10 V15 A11,11 0 0 0 24,15 V10 H18 V15 A5,5 0 0 1 8,15 V10 Z" fill="#afb1b3"/><rect x="2" y="2" width="6" height="5" fill="#3592c4"/><rect x="18" y="2" width="6" height="5" fill="#3592c4"/><path d="M0,0 L26,26" stroke="#37383a" stroke-width="4.5"/><path d="M0.5,0.5 L26,26" stroke="#afb1b3" stroke-width="2.2"/></svg>
<div style="position:absolute;left:1630px;top:451px;width:619px;height:1100px;background:#ffffff;"></div>
<svg style="position:absolute;left:1630px;top:451px;overflow:visible" width="619" height="1100"><rect x="1" y="1" width="617" height="1098" stroke="#2f80ed" stroke-width="2.4" fill="none"/><rect x="615" y="4" width="1.2" height="1094" fill="#3a3a3a"/></svg>
<svg style="position:absolute;left:2250px;top:1555px;overflow:visible" width="40" height="40"><path d="M3,36 L37,2 M19,36 L37,18" stroke="#8a8b8d" stroke-width="1.6"/></svg>
<svg style="position:absolute;left:1740px;top:900px;overflow:visible" width="400" height="200" viewBox="0 0 2576 1288"><g fill="none" stroke="#5468e0" stroke-linecap="round" stroke-linejoin="round"><path d="M255,705 C320,690 360,715 420,755 C480,790 545,800 585,760 C625,715 590,665 520,625 C430,575 385,535 395,470 C415,370 560,265 655,265 C745,265 735,350 700,410 C665,470 635,500 650,535" stroke-width="86"/><path d="M695,805 C740,700 790,580 845,470" stroke-width="80"/><path d="M830,540 C880,490 930,460 975,465 C1010,470 1000,520 980,560 C930,650 880,730 905,790 C930,830 1000,800 1050,745" stroke-width="72"/><path d="M1050,745 C1110,640 1200,500 1290,490 C1340,490 1330,540 1300,600 C1250,700 1180,800 1120,800 C1080,795 1085,720 1120,650" stroke-width="74"/><path d="M1385,490 C1330,620 1260,760 1230,850 C1180,980 1120,1130 1050,1125 C990,1120 1010,1030 1060,970 C1110,910 1200,860 1280,830 C1340,805 1390,760 1430,715" stroke-width="66"/><path d="M1560,480 C1520,580 1470,680 1460,750 C1455,810 1500,820 1550,790 C1590,760 1610,730 1620,705" stroke-width="70"/><path d="M1615,805 C1660,700 1710,580 1760,470" stroke-width="80"/><path d="M1750,540 C1800,490 1850,460 1895,465 C1930,470 1920,520 1900,560 C1850,650 1800,730 1825,790 C1850,830 1920,800 1975,730" stroke-width="72"/><path d="M1975,730 C2030,690 2150,650 2220,590 C2280,540 2260,470 2180,490 C2080,520 2000,650 2020,750 C2040,830 2110,830 2180,790 C2230,760 2260,720 2280,690" stroke-width="72"/></g><circle cx="1618" cy="410" r="50" fill="#5468e0"/></svg>
<div style="position:absolute;left:2341px;top:451px;width:620px;height:1100px;background:#1f5264;"></div>
<svg style="position:absolute;left:0;top:0;overflow:visible" width="3036" height="1594"><rect x="2342.4" y="452.4" width="617.2" height="1097.2" stroke="#dff2f8" stroke-width="2.8" fill="none"/><rect x="2341.5" y="451.5" width="619" height="1099" stroke="#222425" stroke-opacity="0.55" stroke-width="1" fill="none" stroke-dasharray="4 4"/><rect x="2958" y="454" width="1.2" height="1094" fill="#1a3a45"/><rect x="2442" y="780" width="421" height="444" fill="#295b6e"/><path d="M2443,930 C2450,922 2460,912 2467,905 L2468,913 C2510,870 2550,790 2587,790 C2615,790 2635,825 2655,833 L2663,835 C2690,855 2710,905 2738,930 C2780,960 2830,978 2862,992 L2862,781 L2443,781 Z" fill="#2e6679"/><path d="M2443,930 C2450,922 2460,912 2467,905 L2468,913 C2510,870 2550,790 2587,790 C2615,790 2635,825 2655,833 L2663,835 C2690,855 2710,905 2738,930 C2780,960 2830,978 2862,992" stroke="#6ec3de" stroke-width="1.8" fill="none"/><rect x="2442.5" y="780.5" width="420" height="443" stroke="#6ec3de" stroke-width="2" fill="none" stroke-dasharray="7 1"/><polyline points="2652.5,453 2652.5,467 2659.3,473 2645.7,479 2659.3,485 2645.7,491 2659.3,497 2645.7,503 2659.3,509 2645.7,515 2659.3,521 2645.7,527 2659.3,533 2645.7,539 2659.3,545 2645.7,551 2659.3,557 2645.7,563 2659.3,569 2645.7,575 2659.3,581 2645.7,587 2659.3,593 2645.7,599 2659.3,605 2645.7,611 2659.3,617 2645.7,623 2659.3,629 2645.7,635 2659.3,641 2645.7,647 2659.3,653 2645.7,659 2659.3,665 2645.7,671 2659.3,677 2645.7,683 2659.3,689 2645.7,695 2659.3,701 2645.7,707 2659.3,713 2645.7,719 2659.3,725 2645.7,731 2659.3,737 2645.7,743 2659.3,749 2645.7,755 2659.3,761 2652.5,765 2652.5,780" stroke="#6ec3de" stroke-width="1.8" fill="none"/><polyline points="2652.5,1224 2652.5,1236 2659.3,1242 2645.7,1248 2659.3,1254 2645.7,1260 2659.3,1266 2645.7,1272 2659.3,1278 2645.7,1284 2659.3,1290 2645.7,1296 2659.3,1302 2645.7,1308 2659.3,1314 2645.7,1320 2659.3,1326 2645.7,1332 2659.3,1338 2645.7,1344 2659.3,1350 2645.7,1356 2659.3,1362 2645.7,1368 2659.3,1374 2645.7,1380 2659.3,1386 2645.7,1392 2659.3,1398 2645.7,1404 2659.3,1410 2645.7,1416 2659.3,1422 2645.7,1428 2659.3,1434 2645.7,1440 2659.3,1446 2645.7,1452 2659.3,1458 2645.7,1464 2659.3,1470 2645.7,1476 2659.3,1482 2645.7,1488 2659.3,1494 2645.7,1500 2659.3,1506 2645.7,1512 2659.3,1518 2645.7,1524 2659.3,1530 2652.5,1535 2652.5,1550" stroke="#6ec3de" stroke-width="1.8" fill="none"/><polyline points="2343,1000 2357,1000 2363,993 2369,1007 2375,993 2381,1007 2387,993 2393,1007 2399,993 2405,1007 2411,993 2417,1007 2423,993 2429,1007 2429,1000 2442,1000" stroke="#6ec3de" stroke-width="1.8" fill="none"/><polyline points="2863,1000 2875,1000 2881,993 2887,1007 2893,993 2899,1007 2905,993 2911,1007 2917,993 2923,1007 2929,993 2935,1007 2941,993 2947,1007 2947,1000 2959,1000" stroke="#6ec3de" stroke-width="1.8" fill="none"/></svg>
<div class="t" style="left:2520px;top:1048.02px;font-size:55.5px;color:#6bb4cd;font-weight:normal;letter-spacing:-1.1px;-webkit-text-stroke:0.9px #6bb4cd;">ImageView</div>
</body></html>
